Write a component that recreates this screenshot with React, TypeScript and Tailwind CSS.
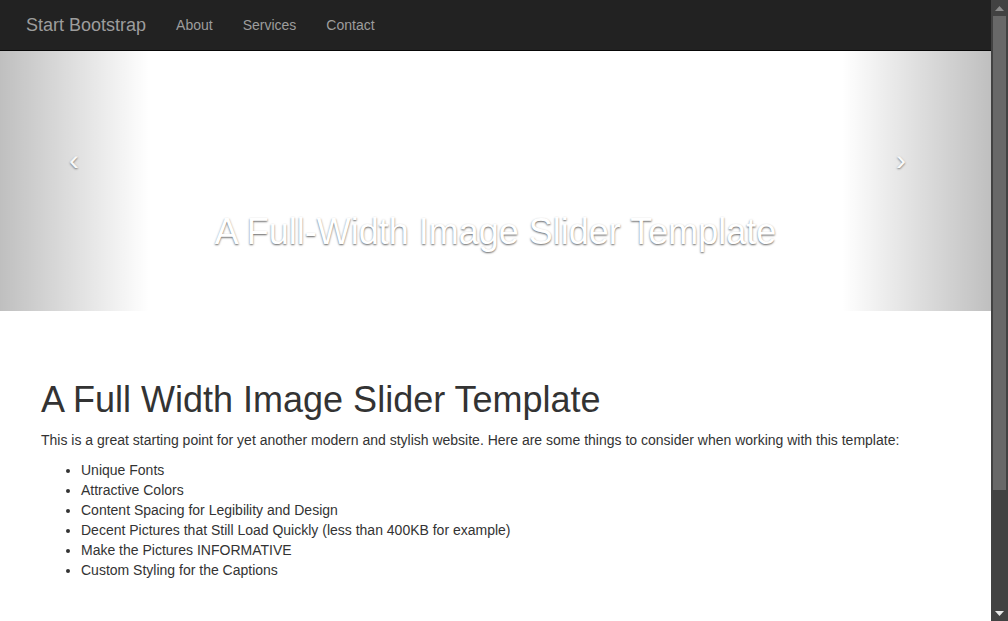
import React from 'react';

const links = ['About', 'Services', 'Contact'];

const points = [
  'Unique Fonts',
  'Attractive Colors',
  'Content Spacing for Legibility and Design',
  'Decent Pictures that Still Load Quickly (less than 400KB for example)',
  'Make the Pictures INFORMATIVE',
  'Custom Styling for the Captions',
];

const Navbar: React.FC = () => (
  <nav className="h-[51px] bg-[#222222] border-b border-[#080808] flex items-start pl-[11px]">
    <a className="px-[15px] py-[15px] text-[18px] leading-[20px] text-[#9d9d9d]">Start Bootstrap</a>
    <ul className="flex">
      {links.map(l => (
        <li key={l}>
          <a className="block px-[15px] py-[15px] text-[14px] leading-[20px] text-[#9d9d9d]">{l}</a>
        </li>
      ))}
    </ul>
  </nav>
);

const Slider: React.FC = () => (
  <div className="relative h-[260px] bg-white overflow-hidden">
    <div className="absolute left-0 top-0 bottom-0 w-[15%] bg-[linear-gradient(to_right,rgba(0,0,0,0.25),rgba(0,0,0,0))]" />
    <div className="absolute right-0 top-0 bottom-0 w-[15%] bg-[linear-gradient(to_left,rgba(0,0,0,0.25),rgba(0,0,0,0))]" />
    <span className="absolute left-[66px] top-[94px] w-[16px] text-center text-[30px] leading-[30px] text-white opacity-80 [text-shadow:0_1px_2px_rgba(0,0,0,0.6)]">
      ‹
    </span>
    <span className="absolute left-[893px] top-[94px] w-[16px] text-center text-[30px] leading-[30px] text-white opacity-80 [text-shadow:0_1px_2px_rgba(0,0,0,0.6)]">
      ›
    </span>
    <div className="absolute left-[20%] right-[20%] bottom-[29px] pt-[20px] pb-[30px] text-center text-white [text-shadow:0_1px_2px_rgba(0,0,0,0.6)]">
      <h2 className="text-[36px] leading-[39.6px] font-normal whitespace-nowrap -mx-[100px]">A Full-Width Image Slider Template</h2>
    </div>
  </div>
);

const Scrollbar: React.FC = () => (
  <div className="w-[17px] h-full bg-[#424242] flex flex-col items-center">
    <div className="h-[16px] w-full flex items-center justify-center">
      <svg width="9" height="5" viewBox="0 0 9 5"><path d="M4.5 0 L9 5 L0 5 Z" fill="#8c8c8c" /></svg>
    </div>
    <div className="w-[13px] h-[474px] bg-[#686868]" />
    <div className="flex-1" />
    <div className="h-[16px] w-full flex items-center justify-center">
      <svg width="9" height="5" viewBox="0 0 9 5"><path d="M0 0 L9 0 L4.5 5 Z" fill="#e8e8e8" /></svg>
    </div>
  </div>
);

export default function App() {
  return (
    <div className="flex h-[621px] w-[1008px] overflow-hidden bg-white font-['Liberation_Sans',Arial,sans-serif] text-[#333333]">
      <div className="w-[991px] h-full flex flex-col">
        <Navbar />
        <Slider />
        <div className="pt-[69px] px-[41px]">
          <h1 className="text-[36px] leading-[39.6px] font-normal mb-[10px]">A Full Width Image Slider Template</h1>
          <p className="text-[14px] leading-[20px] mb-[10px]">
            This is a great starting point for yet another modern and stylish website. Here are some things to consider when working with this template:
          </p>
          <ul className="list-disc pl-[40px] text-[14px] leading-[20px]">
            {points.map(p => (
              <li key={p}>{p}</li>
            ))}
          </ul>
        </div>
      </div>
      <Scrollbar />
    </div>
  );
}
